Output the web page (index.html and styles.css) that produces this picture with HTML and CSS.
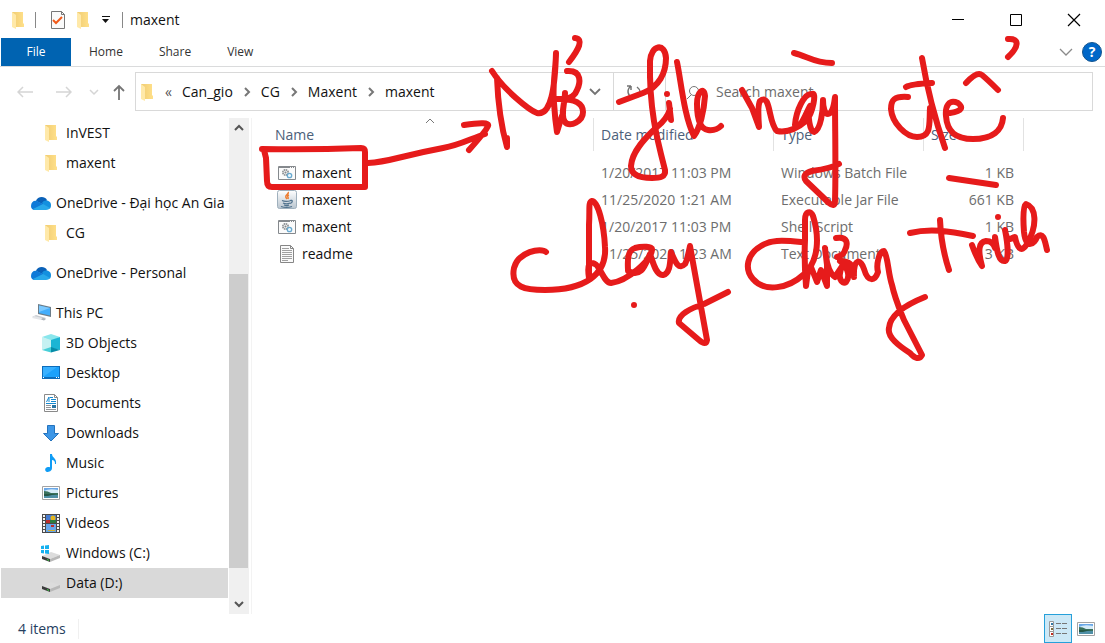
FILE: index.html
```html
<!DOCTYPE html>
<html lang="en">
<head>
<meta charset="utf-8">
<meta name="viewport" content="width=device-width, initial-scale=1">
<title>maxent</title>
<link rel="stylesheet" href="styles.css">
</head>
<body>
<svg class="defs" aria-hidden="true">
  <defs>
    <linearGradient id="gold" x1="0" x2="1"><stop offset="0" stop-color="#f0cc72"/><stop offset="1" stop-color="#ffe08a"/></linearGradient>
    <linearGradient id="tile" x1="0" y1="0" x2="0" y2="1"><stop offset="0" stop-color="#fff"/><stop offset="1" stop-color="#b9c5cf"/></linearGradient>
  </defs>
  <symbol id="folder" viewBox="0 0 20 20"><path fill="url(#gold)" d="M4 2h11v11l1 1v3H6z"/><path fill="#ffe9a9" d="M4 2l4 3v14l-4-2z"/></symbol>
  <symbol id="cloud" viewBox="0 0 20 20"><path fill="#0a61b8" d="M5 8c1-4 8-6 11-1l-3 5z"/><path fill="#0f7ad8" d="M0 13c0-4 3-6 6-5l8 4-10 5c-3 0-4-2-4-4z"/><path fill="#1490df" d="M11 10c2-4 9-3 9 2 0 3-1 4-3 4z"/><path fill="#28a8ea" d="M2 16l10-5 7 4c-1 1-2 2-4 2H5c-1 0-2 0-3-1z"/></symbol>
  <symbol id="pc" viewBox="0 0 20 20"><path fill="#6b7d8a" d="M7 1l13 3v10L7 11z"/><path fill="#43aefc" d="M8 2.500l11 2.500v7.500L8 10z"/><path fill="#7cc9ff" d="M8 2.500l11 2.500-11 4z"/><path fill="#c9cdd2" d="M5 12l10 3-2 2-12-3z"/><path fill="#e4e6e9" d="M3 13l8 2-1 2-9-2z"/><path fill="#aeb5bb" d="M12 15l3 1-2 1.500-3-1z"/></symbol>
  <symbol id="cube" viewBox="0 0 20 20"><path fill="#8ae6ec" d="M10 1l9 3-9 4-9-4z"/><path fill="#c5f1f2" d="M1 4l9 3v8l-9 2z"/><path fill="#1cb5d4" d="M10 7l9-3v13l-9-2z"/><path fill="#068ca8" d="M10 14l9 3-9 2.500z"/><path fill="#48cfd8" d="M10 14v5.500L1 17z"/></symbol>
  <symbol id="desktop" viewBox="0 0 20 20"><path fill="#0d6cba" d="M1 3h18v13H1z"/><path fill="#1ba1fb" d="M2 4h16v10H2z"/><path fill="#38b0ff" d="M2 14V4h14z"/><path fill="#fff" d="M2 15h1v-1H2zm13 0h1v-1h-1zm2 0h1v-1h-1z"/></symbol>
  <symbol id="doc" viewBox="0 0 20 20"><path fill="#fff" stroke="#8a8a8a" d="M3.500 1.500h10l3 3v14h-13z"/><path fill="none" stroke="#8a8a8a" d="M13.500 1.500v3h3"/><path stroke="#1689d0" d="M9 4.500h3M10 6.500h5M10 8.500h5M5 10.500h10M5.500 9l2.500-5v5" fill="none"/><path stroke="#8f9499" d="M5 12.500h5m-5 2h5m-5 2h10"/><path fill="#2874a2" d="M11 12h4v3h-4z"/></symbol>
  <symbol id="down" viewBox="0 0 20 20"><path fill="#3e97e7" stroke="#2473bd" d="M6.500 2.500h7v8h4L10 18l-7.500-7.500h4z"/></symbol>
  <symbol id="music" viewBox="0 0 20 20"><path fill="#0f9cf5" d="M9 1h2c0 4 5 4 4 10h-1c0-3-1-4-3-4v8c0 3-3 4-5 4-3-1-2-5 1-5 1 0 2 0 2 .500z"/></symbol>
  <symbol id="picture" viewBox="0 0 20 20"><path fill="#fff" stroke="#a3a3a3" d="M1.500 3.500h17v13h-17z"/><path fill="#6aa8e8" d="M3 5h14v5H3z"/><path fill="#d5ebf8" d="M3 8q5-3 14-1v3H3z"/><path fill="#39705c" d="M3 8q4 0 7 2h7v2H3z"/><path fill="#4f8fa6" d="M3 12h14v3H3z"/><path fill="#255745" d="M3 11h12l-8 2H3z"/></symbol>
  <symbol id="video" viewBox="0 0 20 20"><path fill="#4b4b4b" d="M1 1h18v19H1z"/><path stroke="#f4f4f4" stroke-width="2" stroke-dasharray="2 1" d="M3 2v17M17 2v17"/><path fill="#467bd0" d="M5 2h10v8H5z"/><path fill="#67a6ea" d="M5 11h10v8H5z"/><circle cx="12" cy="5" r="2.500" fill="#e3b51d"/><path fill="#bd2b2b" d="M5 7h4v3H5zm5 5h3v2h-3z"/><path fill="#2c7c41" d="M9 7h6v3H9z"/><path fill="#d8ae25" d="M7 17h7v1H7z"/></symbol>
  <symbol id="drive" viewBox="0 0 20 20"><path fill="#dcdcdc" d="M1 13l9-4 9 3-10 4z"/><path fill="#3b3b3b" d="M1 13l8 3v3l-8-3z"/><path fill="#b8b8b8" d="M9 16l10-4v3L9 19z"/><path fill="#35d13e" d="M6 16l2 1v1l-2-1z"/></symbol>
  <symbol id="windrive" viewBox="0 0 20 20"><use href="#drive"/><path fill="#16b1ef" d="M0 3l3-.500V6H0zm4-.600L8 2v4H4zM0 7h3v3.500L0 10zm4 0h4v4l-4-.400z"/></symbol>
  <symbol id="batch" viewBox="0 0 20 20"><path fill="#fbfbfb" stroke="#85898d" d="M1.500 3.500h17v13h-17z"/><path stroke="#85898d" d="M2 4.500h11m1 0h1m1 0h1"/><circle cx="8.500" cy="9.500" r="2.700" fill="#eee" stroke="#85898d" stroke-width="1.500" stroke-dasharray="1.500 .6"/><circle cx="8.500" cy="9.500" r="1" fill="#85898d"/><circle cx="12.500" cy="12.500" r="2.200" fill="#e9f6fd" stroke="#69a9cf" stroke-width="1.300"/></symbol>
  <symbol id="java" viewBox="0 0 20 20"><rect x=".5" y=".5" width="19" height="18" rx="2" fill="url(#tile)" stroke="#9fb0bd"/><path fill="none" stroke="#ed7d31" stroke-width="1.500" d="M11 2c2 2-5 3-1 7m2-4c-3 1 0 2-1 4"/><path fill="none" stroke="#50728d" stroke-width="1.300" d="M5 10.500c2 1 6 1 9 0m-8 2.500c2 1 5 1 7 0m-6 2c2 .700 4 .700 5 0m-8 1.500c3 1 8 1 11 0m-2-6c3-1 3 2 0 3"/></symbol>
  <symbol id="text" viewBox="0 0 20 20"><path fill="#fafafa" stroke="#868686" d="M3.500 1.500h10l3 3v14h-13z"/><path fill="none" stroke="#868686" d="M13.500 1.500v3h3"/><path stroke="#a0a0a0" d="M5 4.500h7m-7 2h10m-10 2h10m-10 2h10m-10 2h10m-10 2h10m-10 2h6"/></symbol>
</svg>

<header class="titlebar">
  <svg class="icon"><use href="#folder"/></svg>
  <span class="rule"></span>
  <button class="plain" aria-label="Properties"><svg class="icon" viewBox="0 0 20 20"><path fill="#fafafa" stroke="#777" d="M3.500 1.500h10l3 3v14h-13z"/><path fill="none" stroke="#777" d="M13.500 1.500v3h3"/><path fill="none" stroke="#f05a1a" stroke-width="2" d="M5 10l3 3 6-6"/></svg></button>
  <button class="plain new" aria-label="New folder"><svg class="icon"><use href="#folder"/></svg></button>
  <button class="plain more" aria-label="Customize Quick Access Toolbar"><svg width="8" height="8"><path d="M0 .500h8" stroke="#111"/><path d="M0 3h7L3.500 7z" fill="#111"/></svg></button>
  <span class="rule"></span>
  <h1 class="title">maxent</h1>
  <div class="window-buttons">
    <button class="plain" aria-label="Minimize"><svg width="14" height="14"><path d="M1 6.500h12" stroke="#000"/></svg></button>
    <button class="plain" aria-label="Maximize"><svg width="14" height="14"><path d="M1.500 1.500h11v11h-11z" fill="none" stroke="#000"/></svg></button>
    <button class="plain" aria-label="Close"><svg width="14" height="14"><path d="M1 1l12 12M13 1L1 13" stroke="#000" stroke-width="1.200"/></svg></button>
  </div>
</header>

<nav class="tabs" aria-label="Ribbon">
  <button class="tab active">File</button>
  <button class="tab">Home</button>
  <button class="tab">Share</button>
  <button class="tab">View</button>
  <div class="tab-tools">
    <button class="plain" aria-label="Expand the Ribbon"><svg width="14" height="10"><path d="M1 2l6 6 6-6" fill="none" stroke="#8a8a8a" stroke-width="1.300"/></svg></button>
    <button class="help" aria-label="Help">?</button>
  </div>
</nav>

<div class="location">
  <div class="history">
    <button class="plain" aria-label="Back"><svg width="16" height="12"><path d="M16 6H1m5-5L1 6l5 5" fill="none" stroke="#d5d5d5" stroke-width="1.500"/></svg></button>
    <button class="plain forward" aria-label="Forward"><svg width="16" height="12"><path d="M0 6h15m-5-5l5 5-5 5" fill="none" stroke="#d5d5d5" stroke-width="1.500"/></svg></button>
    <button class="plain recent" aria-label="Recent locations"><svg width="10" height="8"><path d="M1 2l4 4 4-4" fill="none" stroke="#d5d5d5" stroke-width="1.500"/></svg></button>
    <button class="plain" aria-label="Up"><svg width="12" height="16"><path d="M6 16V2M1 7l5-5 5 5" fill="none" stroke="#757575" stroke-width="1.800"/></svg></button>
  </div>
  <div class="address">
    <div class="crumbs">
      <svg class="icon"><use href="#folder"/></svg>
      <span class="angles">«</span>
      <a href="#">Can_gio</a><svg class="sep" viewBox="0 0 8 10"><path d="M2 1l4 4-4 4"/></svg>
      <a href="#">CG</a><svg class="sep" viewBox="0 0 8 10"><path d="M2 1l4 4-4 4"/></svg>
      <a href="#">Maxent</a><svg class="sep" viewBox="0 0 8 10"><path d="M2 1l4 4-4 4"/></svg>
      <a href="#">maxent</a>
      <button class="plain drop" aria-label="Previous locations"><svg width="12" height="10"><path d="M1 2l5 5 5-5" fill="none" stroke="#737373" stroke-width="1.800"/></svg></button>
    </div>
    <button class="plain refresh" aria-label="Refresh"><svg width="16" height="16"><path d="M5 2H1m4 0v4M5 2C0 6 2 12 6 13m5-10c4 3 4 7 1 10" fill="none" stroke="#737373" stroke-width="1.500"/></svg></button>
    <label class="search"><svg width="14" height="16"><path d="M5 11l-4 4" stroke="#777"/><circle cx="8" cy="7" r="4.500" fill="none" stroke="#777"/></svg><input type="search" placeholder="Search maxent" aria-label="Search maxent"></label>
  </div>
</div>

<main class="body">
  <nav class="tree" aria-label="Folders">
    <div class="group"><a class="sub" href="#"><svg class="icon"><use href="#folder"/></svg>InVEST</a><a class="sub" href="#"><svg class="icon"><use href="#folder"/></svg>maxent</a></div>
    <div class="group"><a href="#"><svg class="icon"><use href="#cloud"/></svg>OneDrive - Đại học An Gia</a><a class="sub" href="#"><svg class="icon"><use href="#folder"/></svg>CG</a></div>
    <div class="group"><a href="#"><svg class="icon"><use href="#cloud"/></svg>OneDrive - Personal</a></div>
    <div class="group">
      <a href="#"><svg class="icon"><use href="#pc"/></svg>This PC</a>
      <a class="sub" href="#"><svg class="icon"><use href="#cube"/></svg>3D Objects</a>
      <a class="sub" href="#"><svg class="icon"><use href="#desktop"/></svg>Desktop</a>
      <a class="sub" href="#"><svg class="icon"><use href="#doc"/></svg>Documents</a>
      <a class="sub" href="#"><svg class="icon"><use href="#down"/></svg>Downloads</a>
      <a class="sub" href="#"><svg class="icon"><use href="#music"/></svg>Music</a>
      <a class="sub" href="#"><svg class="icon"><use href="#picture"/></svg>Pictures</a>
      <a class="sub" href="#"><svg class="icon"><use href="#video"/></svg>Videos</a>
      <a class="sub" href="#"><svg class="icon"><use href="#windrive"/></svg>Windows (C:)</a>
      <a class="sub selected" href="#" aria-current="true"><svg class="icon"><use href="#drive"/></svg>Data (D:)</a>
    </div>
  </nav>
  <div class="scrollbar">
    <button class="plain" aria-label="Scroll up"><svg width="12" height="10"><path d="M2 7l4-4 4 4" fill="none" stroke="#555" stroke-width="2"/></svg></button>
    <div class="track"><div class="thumb"></div></div>
    <button class="plain" aria-label="Scroll down"><svg width="12" height="10"><path d="M2 3l4 4 4-4" fill="none" stroke="#555" stroke-width="2"/></svg></button>
  </div>
  <section class="files">
    <table>
      <colgroup><col class="c-name"><col class="c-date"><col class="c-type"><col class="c-size"><col></colgroup>
      <thead><tr><th aria-sort="ascending">Name<svg class="sort" width="10" height="6"><path d="M1 5l4-4 4 4" fill="none" stroke="#777"/></svg></th><th>Date modified</th><th>Type</th><th>Size</th><td></td></tr></thead>
      <tbody>
        <tr><td><div class="file"><svg class="icon"><use href="#batch"/></svg>maxent</div></td><td>1/20/2017 11:03 PM</td><td>Windows Batch File</td><td class="size">1 KB</td><td></td></tr>
        <tr><td><div class="file"><svg class="icon"><use href="#java"/></svg>maxent</div></td><td>11/25/2020 1:21 AM</td><td>Executable Jar File</td><td class="size">661 KB</td><td></td></tr>
        <tr><td><div class="file"><svg class="icon"><use href="#batch"/></svg>maxent</div></td><td>1/20/2017 11:03 PM</td><td>Shell Script</td><td class="size">1 KB</td><td></td></tr>
        <tr><td><div class="file"><svg class="icon"><use href="#text"/></svg>readme</div></td><td>11/25/2020 1:23 AM</td><td>Text Document</td><td class="size">13 KB</td><td></td></tr>
      </tbody>
    </table>
  </section>
</main>

<footer class="status">
  <span class="count">4 items</span>
  <div class="views">
    <button class="view on" aria-label="Details view"><svg width="20" height="20"><path fill="#fff" stroke="#999" d="M1.500 2.500h4v5h-4zm0 5h4v5h-4zm0 5h4v5h-4z"/><path fill="#3179a5" d="M3 4h2v2H3z"/><path fill="#7d7040" d="M3 9h2v2H3z"/><path fill="#c32b20" d="M3 14h2v2H3z"/><path stroke="#777" d="M8 4.500h5m1 0h5M8 9.500h5m1 0h5M8 14.500h5m1 0h5"/></svg></button>
    <button class="view" aria-label="Large icons view"><svg class="icon"><use href="#picture"/></svg></button>
  </div>
</footer>

<svg class="ink" viewBox="0 0 1105 643" role="img" aria-label="Mở file này để chạy chương trình">
  <path d="M262 149Q310 150 361 148Q365 148 365 152L365 187L272 187Q267 187 267 181L266 158L264 150"/>
  <path d="M368 163C390 162 395 157 443 148C460 145 470 139 485 134M464 125Q490 121 488 126Q486 131 469 150"/>
  <path d="M492 71C504 90 529 110 537 113C551 116 555 88 556 53C556 68 552 86 554 103Q555 119 557 132Q559 125 562 116M497 78C498 105 501 126 507 147L507 138"/>
  <path d="M567 71C583 70 580 84 577 90C575 96 571 98 565 99L555 99C576 98 583 104 583 112C583 121 570 128 565 122C560 116 565 102 565 93M575 38C584 39 579 49 569 62"/>
  <path d="M619 102L643 93C659 87 666 73 666 58C665 42 651 45 650 61C649 109 657 139 665 170C666 177 660 178 652 178C639 178 631 175 631 166C632 151 646 137 657 127Q667 119 670 109M669 103L671 120M667 94v.1"/>
  <path d="M677 62C681 81 684 116 694 136C700 128 704 111 705 96C704 86 697 92 697 104C697 121 701 129 708 130Q716 131 721 126"/>
  <path d="M742 90L752 108L759 127C758 113 758 104 760 101C771 92 768 123 777 131C788 133 799 127 806 121C813 113 817 91 812 94C804 93 796 111 795 125C800 131 806 113 810 106C807 115 810 132 814 132C821 130 823 110 823 100C823 108 825 114 828 114Q833 114 835 97C835 130 836 170 835 201Q835 208 829 203L806 181Q801 174 812 171Q832 168 839 164M794 53C807 56 814 63 832 63"/>
  <path d="M908 97C894 96 891 100 891 109C892 123 906 137 917 137C932 137 929 124 930 108M922 58C927 88 936 122 945 148M906 87Q911 84 932 83M950 113C963 111 963 107 958 103C949 99 945 106 946 116C947 132 956 139 973 139C993 139 1002 130 1003 118M966 83Q977 71 982 75Q988 80 998 90M1008 39C1020 38 1019 47 1008 57M949 178L996 185"/>
  <path d="M546 252C541 247 518 252 514 268C510 288 526 290 545 290C584 290 607 275 605 247C604 225 598 201 592 201C588 202 590 210 589 225V278C587 265 589 261 595 264C600 266 604 283 611 283C628 281 651 260 652 250C653 246 642 246 635 248C626 251 628 264 628 271C642 278 645 265 650 254C653 262 656 276 663 275C671 273 670 260 671 252C676 264 679 270 685 264Q687 261 690 246C696 280 702 311 707 340Q706 346 699 340L679 323C677 315 691 308 704 304L728 292M634 305v.1"/>
  <path d="M801 242C781 240 770 240 761 246C747 254 744 269 753 279C765 293 789 288 803 275C820 261 819 235 813 216C811 210 805 211 805 220V240Q804 260 806 286C808 271 808 266 811 267L817 282L821 270L827 286V265L825 248Q827 272 835 277L843 265C836 277 842 285 846 282C851 276 847 266 840 261C848 261 854 263 854 277C853 257 861 259 864 269C868 283 875 281 878 272C876 265 879 251 884 251C888 256 888 273 892 285C895 299 900 310 904 320L922 355Q918 362 910 353C899 346 887 337 889 328C890 315 905 305 925 297M836 238C848 236 848 244 845 250Q844 255 837 257"/>
  <path d="M910 233C930 228 949 231 973 236M940 220C941 242 945 258 949 270M972 245Q977 259 982 266C978 252 978 242 986 241Q993 241 995 248V237C997 252 999 262 1005 261C1009 260 1008 245 1005 230C1008 246 1012 236 1015 237C1017 247 1021 254 1027 244C1038 225 1036 207 1026 204C1023 206 1023 219 1024 232C1026 251 1035 243 1037 237C1044 231 1045 242 1047 250M998 217v.1"/>
</svg>
</body>
</html>
```

FILE: styles.css
```css
* { box-sizing: border-box; }

body {
  margin: 0;
  min-height: 100vh;
  position: relative;
  display: flex;
  flex-direction: column;
  background: #fff;
  color: #111;
  font: 14px/20px "Open Sans", "Noto Sans", sans-serif;
}

a { color: inherit; text-decoration: none; }
button, input { font: inherit; color: inherit; }
.defs { position: absolute; width: 0; height: 0; }
.icon { width: 20px; height: 20px; flex: none; display: block; }

.plain {
  display: flex;
  align-items: center;
  justify-content: center;
  padding: 0;
  border: 0;
  background: transparent;
}

.titlebar { display: flex; align-items: center; height: 38px; padding: 2px 2px 0 8px; }
.rule { width: 1px; height: 16px; margin: 0 7px; background: #888; }
.titlebar .rule + .plain { margin-left: 5px; }
.titlebar .new { margin-left: 5px; }
.titlebar .more { width: 26px; }
.titlebar .more + .rule { margin-left: 3px; }
.title { margin: 0; font-size: 14px; font-weight: 400; }
.window-buttons { display: flex; margin-left: auto; }
.window-buttons .plain { width: 58px; height: 36px; }

.tabs { display: flex; height: 29px; padding-left: 1px; border-bottom: 1px solid #dadbdc; }
.tab { padding: 0 18px; border: 0; background: transparent; font-size: 12px; color: #333; }
.tab.active { width: 70px; background: #0063b1; color: #fff; }
.tab-tools { display: flex; align-items: center; gap: 9px; margin-left: auto; padding-right: 3px; }
.help {
  width: 20px;
  height: 20px;
  padding: 0;
  border: 1px solid #14558f;
  border-radius: 50%;
  background: #0067c8;
  color: #fff;
  font-weight: 700;
  line-height: 18px;
}

.location { display: flex; align-items: center; padding: 5px 12px 7px 0; }
.history { display: flex; align-items: center; width: 135px; padding-left: 17px; }
.history .forward { margin: 0 17px 0 23px; }
.history .recent { margin-right: 14px; }
.address { display: flex; flex: 1; height: 39px; border: 1px solid #d9d9d9; }
.crumbs { display: flex; align-items: center; flex: 0 1 478px; padding-left: 1px; border-right: 1px solid #d9d9d9; }
.angles { margin: 0 10px 0 8px; color: #555; }
.sep { width: 8px; height: 10px; margin: 0 10px; fill: none; stroke: #777; stroke-width: 2; }
.drop { width: 36px; height: 37px; margin-left: auto; }
.refresh { width: 52px; padding-right: 12px; border-right: 1px solid #d9d9d9; }
.search { display: flex; flex: 1; align-items: center; gap: 16px; padding-left: 20px; color: #6d6d6d; }
.search input { flex: 1; min-width: 0; padding: 0; border: 0; outline: 0; background: transparent; }
.search input::placeholder { color: #6d6d6d; opacity: 1; }

.body { display: flex; flex: 1; }
.tree { width: 228px; padding-bottom: 16px; overflow: hidden; }
.group { margin-bottom: 10px; }
.group:last-child { margin-bottom: 0; }
.tree a { display: flex; align-items: center; gap: 5px; height: 30px; margin-left: 1px; padding-left: 30px; white-space: nowrap; }
.tree .sub { padding-left: 40px; }
.tree .selected { background: #d9d9d9; }
.scrollbar { display: flex; flex-direction: column; width: 21px; margin-left: 1px; border-right: 1px solid #fff; background: #f0f0f0; }
.scrollbar .plain { height: 20px; }
.track { display: flex; flex-direction: column; flex: 1; padding: 136px 1px 26px 0; }
.thumb { flex: 1; background: #cdcdcd; }

.files { flex: 1; min-width: 0; margin-left: 1px; border-left: 1px solid #f3f3f3; }
table { width: 100%; table-layout: fixed; border-collapse: separate; border-spacing: 0; }
.c-name { width: 342px; }
.c-date { width: 180px; }
.c-type { width: 150px; }
.c-size { width: 100px; }
th { height: 33px; padding: 0 7px; border-right: 1px solid #e2e2e2; color: #4c607a; font-weight: 400; text-align: left; }
thead tr > :first-child { position: relative; padding-left: 23px; }
.sort { position: absolute; top: 0; left: 50%; margin-left: 2px; }
tbody td { height: 27px; padding: 0 7px; color: #6d6d6d; white-space: nowrap; }
tbody td:first-child { padding-left: 25px; color: #111; }
tbody::before { content: ""; display: block; height: 8px; }
.file { display: flex; align-items: center; gap: 5px; }
tbody .size { padding-right: 10px; text-align: right; }

.status { display: flex; align-items: center; height: 29px; padding-left: 18px; color: #26405f; }
.count { padding-right: 12px; border-right: 1px solid #f0f0f0; }
.views { display: flex; margin-left: auto; padding-right: 5px; }
.view { display: flex; align-items: center; justify-content: center; width: 28px; height: 29px; padding: 0; border: 0; background: transparent; }
.view.on { border: 1px solid #26a0da; background: #cce8f6; }

.ink {
  position: absolute;
  top: 0;
  left: 0;
  width: 1105px;
  max-width: 100%;
  pointer-events: none;
  fill: none;
  stroke: #e61b1b;
  stroke-width: 6;
  stroke-linecap: round;
  stroke-linejoin: round;
}
```
